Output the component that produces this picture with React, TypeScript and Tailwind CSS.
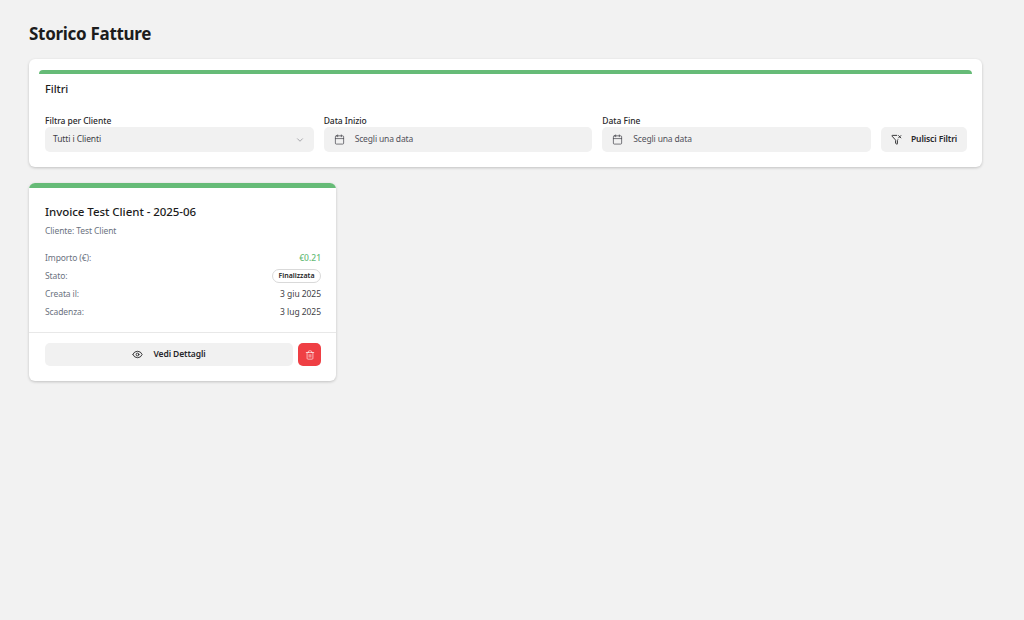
import { Calendar, ChevronDown, Eye, FunnelX, Trash2 } from "lucide-react";

const DateField = ({ label }: { label: string }) => (
  <div className="flex-1 min-w-0">
    <div className="text-[8.5px] leading-[13px] font-medium tracking-[-0.05px] text-[#27272a]">{label}</div>
    <div className="h-[25px] flex items-center pl-[10px] gap-[10px] rounded-[5px] bg-[#f1f1f1] text-[#52525b]">
      <Calendar size={11} strokeWidth={1.5} className="text-[#3f3f46]" />
      <span className="text-[8.5px] tracking-[-0.15px]">Scegli una data</span>
    </div>
  </div>
);

const Row = ({ label, children }: { label: string; children: React.ReactNode }) => (
  <div className="flex items-center justify-between h-[18px]">
    <span className="text-[8.5px] tracking-[-0.1px] text-[#6b7280]">{label}</span>
    {children}
  </div>
);

export default function App() {
  return (
    <div className="min-h-[620px] bg-[#f2f2f2] pl-[29px] pr-[42px] pt-[21px] font-['Noto_Sans',sans-serif] text-[#1c1c1c]">
      <h1 className="text-[17px] leading-[26px] font-bold tracking-[-0.3px]">Storico Fatture</h1>

      <section className="mt-[12px] h-[108px] rounded-md bg-white shadow-[0_1px_3px_rgba(0,0,0,0.2)] pl-[10px] pr-[10px] pt-[11px]">
        <div className="h-[4px] rounded-t-md bg-[#66bb77]" />
        <div className="pl-[6px] pr-[5px]">
          <h2 className="mt-[6px] text-[11px] leading-[18px] font-medium tracking-[-0.05px]">Filtri</h2>
          <div className="mt-[16px] flex items-end gap-[10px]">
            <div className="flex-1 min-w-0">
              <div className="text-[8.5px] leading-[13px] font-medium tracking-[-0.05px] text-[#27272a]">Filtra per Cliente</div>
              <div className="h-[25px] flex items-center justify-between pl-[8px] pr-[9px] rounded-[5px] bg-[#f1f1f1]">
                <span className="text-[8.5px] tracking-[-0.1px] text-[#3f3f46]">Tutti i Clienti</span>
                <ChevronDown size={10} strokeWidth={1.4} className="text-[#71717a]" />
              </div>
            </div>
            <DateField label="Data Inizio" />
            <DateField label="Data Fine" />
            <button className="w-[86px] h-[25px] shrink-0 flex items-center justify-center gap-[9px] rounded-[5px] bg-[#f1f1f1] text-[8.5px] font-semibold tracking-[-0.1px] text-[#27272a]">
              <FunnelX size={11} strokeWidth={2} />
              Pulisci Filtri
            </button>
          </div>
        </div>
      </section>

      <div className="mt-4 grid grid-cols-3 gap-4">
        <article className="h-[198px] rounded-md overflow-hidden bg-white shadow-[0_1px_3px_rgba(0,0,0,0.2)]">
          <div className="h-[5px] bg-[#66bb77]" />
          <div className="pl-[16px] pr-[15px]">
            <h3 className="mt-[15px] text-[11.5px] leading-[18px] font-medium tracking-[-0.05px]">Invoice Test Client - 2025-06</h3>
            <p className="mt-[1px] text-[8.5px] leading-[18px] tracking-[-0.1px] text-[#6b7280]">Cliente: Test Client</p>
            <div className="mt-[9px]">
              <Row label="Importo (€):">
                <span className="text-[8.5px] font-medium text-[#66bb77]">€0.21</span>
              </Row>
              <Row label="Stato:">
                <span className="h-[14px] w-[49px] flex items-center justify-center rounded-full border border-[#d9d9d9] text-[7px] font-semibold">
                  Finalizzata
                </span>
              </Row>
              <Row label="Creata il:">
                <span className="text-[8.5px] tracking-[-0.05px] text-[#3f3f46]">3 giu 2025</span>
              </Row>
              <Row label="Scadenza:">
                <span className="text-[8.5px] tracking-[-0.05px] text-[#3f3f46]">3 lug 2025</span>
              </Row>
            </div>
          </div>
          <div className="mt-[11px] border-t border-[#e8e8e8] pl-[16px] pr-[15px] pt-[10px] flex gap-[5px]">
            <button className="flex-1 h-[23px] flex items-center justify-center gap-[10px] rounded-[5px] bg-[#f1f1f1] text-[8.5px] font-semibold tracking-[-0.1px] text-[#27272a]">
              <Eye size={11} strokeWidth={2} />
              Vedi Dettagli
            </button>
            <button className="w-[23px] h-[23px] flex items-center justify-center rounded-[5px] bg-[#ef3f44] text-white">
              <Trash2 size={10} strokeWidth={1.5} />
            </button>
          </div>
        </article>
      </div>
    </div>
  );
}
